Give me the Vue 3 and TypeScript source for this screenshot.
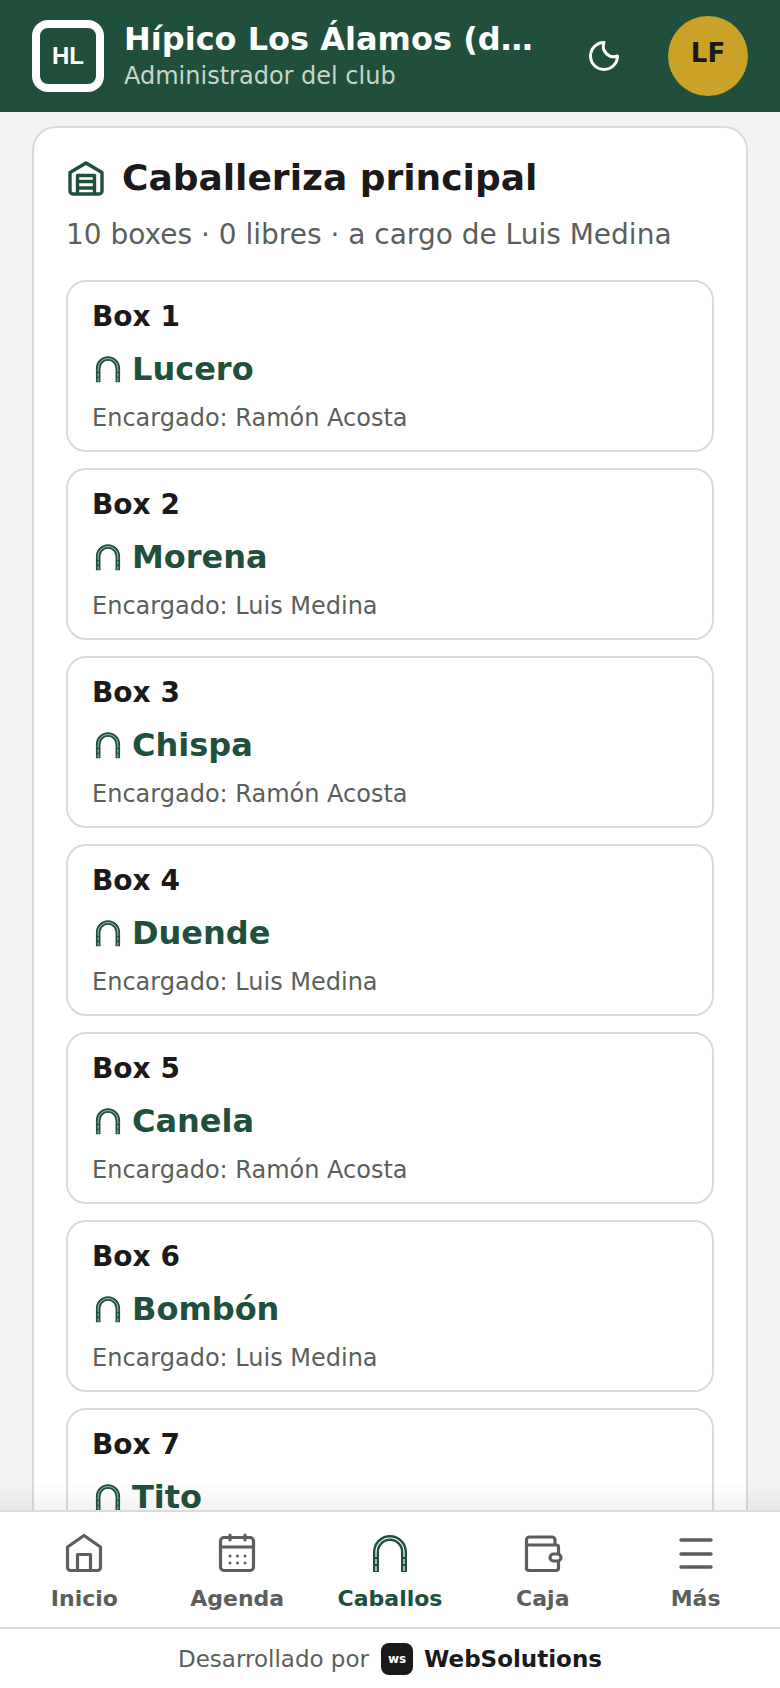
<script setup lang="ts">
interface Stall {
  box: string
  horse: string
  keeper: string
}

const stalls: Stall[] = [
  { box: 'Box 1', horse: 'Lucero', keeper: 'Ramón Acosta' },
  { box: 'Box 2', horse: 'Morena', keeper: 'Luis Medina' },
  { box: 'Box 3', horse: 'Chispa', keeper: 'Ramón Acosta' },
  { box: 'Box 4', horse: 'Duende', keeper: 'Luis Medina' },
  { box: 'Box 5', horse: 'Canela', keeper: 'Ramón Acosta' },
  { box: 'Box 6', horse: 'Bombón', keeper: 'Luis Medina' },
  { box: 'Box 7', horse: 'Tito', keeper: 'Ramón Acosta' },
]
</script>

<template>
  <div class="shell">
    <header class="topbar">
      <div class="logo"><span>HL</span></div>
      <div class="club">
        <div class="club-name">Hípico Los Álamos (demo)</div>
        <div class="club-role">Administrador del club</div>
      </div>
      <svg class="moon" viewBox="0 0 24 24" fill="none" stroke="currentColor" stroke-width="2" stroke-linecap="round" stroke-linejoin="round">
        <path d="M12 3a9 9 0 1 0 9 9 7 7 0 0 1-9-9z" />
      </svg>
      <div class="avatar">LF</div>
    </header>

    <main class="content">
      <section class="card">
        <h1 class="card-title">
          <svg class="barn" viewBox="0 0 40 40" fill="none" stroke="currentColor" stroke-width="3.400" stroke-linejoin="round">
            <path d="M4 14.500 20 5l16 9.500V33a3 3 0 0 1-3 3H7a3 3 0 0 1-3-3z" />
            <path d="M11.500 36V17.500h17V36M11.500 23.500h17M11.500 30h17" />
          </svg>
          Caballeriza principal
        </h1>
        <p class="card-sub">10 boxes · 0 libres · a cargo de Luis Medina</p>

        <div class="stall-list">
          <article v-for="s in stalls" :key="s.box" class="stall">
            <div class="stall-box">{{ s.box }}</div>
            <div class="stall-horse">
              <svg class="shoe" viewBox="0 0 40 40" fill="none">
                <path d="M6 39V19a14 14 0 0 1 28 0v20" stroke="currentColor" stroke-width="6.500" />
                <path d="M6 19a14 14 0 0 1 28 0" stroke="#fff" stroke-width="0.900" />
                <path d="M6 38V19M34 38V19" stroke="#fff" stroke-width="0.900" stroke-dasharray="5 2" />
              </svg>
              {{ s.horse }}
            </div>
            <div class="stall-keeper">Encargado: {{ s.keeper }}</div>
          </article>
        </div>
      </section>
    </main>

    <nav class="tabs">
      <a class="tab">
        <svg viewBox="0 0 40 40" fill="none" stroke="currentColor" stroke-width="3.200" stroke-linejoin="round" stroke-linecap="round">
          <path d="M3.500 14 20 2.500 36.500 14v20.500a3 3 0 0 1-3 3h-27a3 3 0 0 1-3-3z" />
          <path d="M13.500 37.500V21.500h13v16" />
        </svg>
        <span>Inicio</span>
      </a>
      <a class="tab">
        <svg viewBox="0 0 40 40" fill="none" stroke="currentColor" stroke-width="3.200" stroke-linecap="round" stroke-linejoin="round">
          <rect x="3.500" y="4.500" width="33" height="33" rx="3.500" />
          <path d="M3.500 14h33M13 2v5M28 2v5" />
          <path d="M13 23h.01M20.500 23h.01M28 23h.01M13 30h.01M20.500 30h.01M28 30h.01" stroke-width="3" />
        </svg>
        <span>Agenda</span>
      </a>
      <a class="tab active">
        <svg viewBox="0 0 40 40" fill="none">
          <path d="M6 39V19a14 14 0 0 1 28 0v20" stroke="currentColor" stroke-width="6" />
          <path d="M6 19a14 14 0 0 1 28 0" stroke="#fff" stroke-width="1.200" />
          <path d="M6 38V19M34 38V19" stroke="#fff" stroke-width="1.200" stroke-dasharray="5 2" />
        </svg>
        <span>Caballos</span>
      </a>
      <a class="tab">
        <svg viewBox="0 0 40 40" fill="none" stroke="currentColor" stroke-width="3.200" stroke-linecap="round" stroke-linejoin="round">
          <path d="M32 12V7a3 3 0 0 0-3-3H6.500a3 3 0 0 0-3 3v28a2.500 2.500 0 0 0 2.500 2.500h27a2.500 2.500 0 0 0 2.500-2.500V14a2 2 0 0 0-2-2H3.500" />
          <rect x="27" y="21" width="11" height="7" rx="3.500" fill="#fff" />
        </svg>
        <span>Caja</span>
      </a>
      <a class="tab">
        <svg viewBox="0 0 40 40" fill="none" stroke="currentColor" stroke-width="3.400" stroke-linecap="round">
          <path d="M5 7h30M5 21h30M5 34h30" />
        </svg>
        <span>Más</span>
      </a>
    </nav>

    <footer class="credit">
      <span class="credit-text">Desarrollado por</span>
      <span class="ws-badge">ws</span>
      <strong>WebSolutions</strong>
    </footer>
  </div>
</template>

<style>
html,
body {
  margin: 0;
  background: #f2f4f2;
}
</style>

<style scoped>
.shell {
  height: 1688px;
  width: 780px;
  display: flex;
  flex-direction: column;
  overflow: hidden;
  font-family: "DejaVu Sans", sans-serif;
  background: #f2f4f2;
  color: #1a1a1a;
}

.topbar {
  height: 112px;
  flex-shrink: 0;
  box-sizing: border-box;
  padding: 0 32px;
  display: flex;
  align-items: center;
  background: #20503c;
  color: #fff;
}

.logo {
  width: 72px;
  height: 72px;
  box-sizing: border-box;
  border: 8px solid #fff;
  border-radius: 16px;
  display: flex;
  align-items: center;
  justify-content: center;
  flex-shrink: 0;
  font-family: "Liberation Sans", sans-serif;
  font-size: 24px;
  font-weight: 700;
}

.club {
  margin-left: 20px;
  width: 416px;
  min-width: 0;
}

.club-name {
  font-size: 32px;
  font-weight: 700;
  line-height: 40px;
  white-space: nowrap;
  overflow: hidden;
  text-overflow: ellipsis;
}

.club-role {
  font-size: 24px;
  line-height: 34px;
  color: #c4d6cb;
  white-space: nowrap;
}

.moon {
  width: 36px;
  height: 36px;
  margin-left: 46px;
  flex-shrink: 0;
}

.avatar {
  width: 80px;
  height: 80px;
  box-sizing: border-box;
  padding-bottom: 6px;
  border-radius: 50%;
  margin-left: auto;
  background: #c9a227;
  color: #1a1a1a;
  display: flex;
  align-items: center;
  justify-content: center;
  font-size: 26px;
  font-weight: 700;
  flex-shrink: 0;
}

.content {
  flex: 1;
  min-height: 0;
  overflow: hidden;
  padding: 14px 32px 0;
  position: relative;
}

.content::after {
  content: "";
  position: absolute;
  left: 0;
  right: 0;
  bottom: 0;
  height: 28px;
  background: linear-gradient(to bottom, rgba(0, 0, 0, 0), rgba(0, 0, 0, 0.05));
}

.card {
  background: #fff;
  border: 2px solid #d9dbd9;
  border-radius: 24px;
  padding: 26px 32px 32px;
}

.card-title {
  margin: 0;
  display: flex;
  align-items: center;
  gap: 16px;
  font-size: 36px;
  line-height: 48px;
  font-weight: 700;
  color: #1a1a1a;
}

.barn {
  width: 40px;
  height: 40px;
  color: #20503c;
  flex-shrink: 0;
}

.card-sub {
  margin: 13px 0 0;
  font-size: 28px;
  line-height: 40px;
  color: #5a5f5c;
}

.stall-list {
  margin-top: 25px;
  display: flex;
  flex-direction: column;
  gap: 16px;
}

.stall {
  border: 2px solid #d9dbd9;
  border-radius: 20px;
  padding: 17px 24px 16px;
  height: 172px;
  box-sizing: border-box;
}

.stall-box {
  font-size: 28px;
  line-height: 36px;
  font-weight: 700;
  color: #1a1a1a;
}

.stall-horse {
  margin-top: 12px;
  display: flex;
  align-items: center;
  gap: 10px;
  font-size: 32px;
  line-height: 44px;
  font-weight: 700;
  color: #20503c;
}

.shoe {
  width: 28px;
  height: 28px;
  margin-left: 2px;
  flex-shrink: 0;
}

.stall-keeper {
  margin-top: 11px;
  font-size: 24px;
  line-height: 32px;
  color: #5a5f5c;
}

.tabs {
  height: 119px;
  flex-shrink: 0;
  box-sizing: border-box;
  background: #fff;
  border-top: 2px solid #d9dbd9;
  border-bottom: 2px solid #d9dbd9;
  display: grid;
  grid-template-columns: repeat(5, 1fr);
  padding: 0 8px;
}

.tab {
  display: flex;
  flex-direction: column;
  align-items: center;
  padding-top: 21px;
  color: #5a5f5c;
  font-size: 22px;
  font-weight: 700;
}

.tab svg {
  width: 40px;
  height: 40px;
}

.tab span {
  margin-top: 11px;
  line-height: 30px;
}

.tab.active {
  color: #20503c;
}

.credit {
  height: 59px;
  flex-shrink: 0;
  background: #fff;
  display: flex;
  align-items: center;
  justify-content: center;
  font-size: 23px;
}

.credit-text {
  color: #5a5f5c;
}

.ws-badge {
  width: 32px;
  height: 32px;
  margin: 0 11px 0 12px;
  border-radius: 8px;
  background: #1a1a1a;
  color: #fff;
  font-size: 12px;
  font-weight: 700;
  display: flex;
  align-items: center;
  justify-content: center;
}

.credit strong {
  font-weight: 700;
  color: #1a1a1a;
}
</style>
